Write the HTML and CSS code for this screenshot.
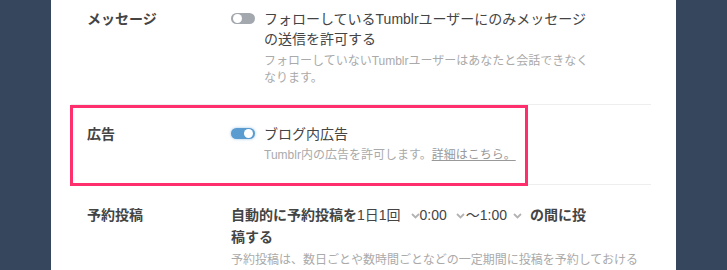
FILE: index.html
```html
<!DOCTYPE html>
<html lang="ja">
<head>
    <meta charset="UTF-8">
    <title>設定</title>
    <link rel="stylesheet" href="styles.css">
</head>
<body>

<div class="page">
    <div class="panel">
        <div class="row first">
            <div class="label">メッセージ</div>
            <div class="field">
                <div class="toggle-line">
                    <span class="toggle"></span>
                    <div class="toggle-text">
                        <p class="main">フォローしているTumblrユーザーにのみメッセージの送信を許可する</p>
                        <p class="desc">フォローしていないTumblrユーザーはあなたと会話できなくなります。</p>
                    </div>
                </div>
            </div>
        </div>

        <div class="row">
            <div class="label">広告</div>
            <div class="field">
                <div class="toggle-line">
                    <span class="toggle on"></span>
                    <div class="toggle-text">
                        <p class="main">ブログ内広告</p>
                        <p class="desc">Tumblr内の広告を許可します。<a href="#">詳細はこちら。</a></p>
                    </div>
                </div>
            </div>
            <div class="highlight"></div>
        </div>

        <div class="row tall">
            <div class="label">予約投稿</div>
            <div class="field">
                <p class="schedule">自動的に予約投稿を<span class="pick">1日1回<svg class="chev c1" viewBox="0 0 9 6" width="9" height="6"><polyline points="1,1 4.5,4.5 8,1"/></svg></span><span class="pick">0:00<svg class="chev c2" viewBox="0 0 9 6" width="9" height="6"><polyline points="1,1 4.5,4.5 8,1"/></svg></span><span class="pick">〜1:00<svg class="chev c3" viewBox="0 0 9 6" width="9" height="6"><polyline points="1,1 4.5,4.5 8,1"/></svg></span>の間に投稿する</p>
                <p class="desc wide">予約投稿は、数日ごとや数時間ごとなどの一定期間に投稿を予約しておけるので、ブログを更新し続けることができます。</p>
            </div>
        </div>
    </div>
</div>

</body>
</html>
```

FILE: styles.css
```css
html, body {
    height: 100%;
}
body {
    margin: 0;
    background-color: #36465d;
    font-family: "Liberation Sans", "Noto Sans CJK JP", sans-serif;
    color: #444;
    overflow: hidden;
}
p {
    margin: 0;
}
.page {
    padding-left: 51px;
    height: 100%;
}
.panel {
    width: 580px;
    height: 100%;
    background-color: #fff;
    padding: 0 25px 0 20px;
}
.row {
    display: flex;
    position: relative;
    padding: 19px 0 20px 16px;
    border-bottom: 1px solid #eee;
    line-height: 20px;
}
.row.first {
    padding-top: 9px;
    padding-bottom: 17px;
}
.row.first .desc {
    margin-top: 4px;
}
.row.tall {
    border-bottom: none;
    line-height: 22px;
}
.label {
    width: 144px;
    flex-shrink: 0;
    font-size: 14px;
    font-weight: bold;
}
.toggle-line {
    display: flex;
    gap: 9px;
}
.toggle {
    width: 24px;
    height: 11px;
    margin-top: 4px;
    border-radius: 6px;
    background-color: #a3a8af;
    position: relative;
    flex-shrink: 0;
}
.toggle::after {
    content: "";
    position: absolute;
    top: 1px;
    left: 2px;
    width: 9px;
    height: 9px;
    border-radius: 50%;
    background-color: #fff;
}
.toggle.on {
    background-color: #5a9bd0;
    box-shadow: 0 0 3px rgba(90,155,208,0.6);
}
.toggle.on::after {
    left: 13px;
}
.toggle-text {
    width: 326px;
}
.main {
    font-size: 14px;
}
.desc {
    margin-top: 3px;
    font-size: 12px;
    line-height: 17px;
    color: #aaa;
}
.desc a {
    color: #999;
    text-decoration: underline;
}
.desc.wide {
    width: 412px;
    margin-top: 4px;
}
.schedule {
    width: 360px;
    font-size: 14px;
    font-weight: bold;
}
.pick {
    font-weight: normal;
}
.chev {
    margin-bottom: 1px;
    vertical-align: middle;
}
.chev.c1 {
    margin-left: 10px;
}
.chev.c2 {
    margin-left: 9px;
    margin-right: 1px;
}
.chev.c3 {
    margin-left: 6px;
    margin-right: 8px;
}
.chev polyline {
    fill: none;
    stroke: #b3b3b3;
    stroke-width: 1.8;
}
.highlight {
    position: absolute;
    left: -1px;
    top: 0;
    width: 452px;
    height: 75px;
    border: 3px solid #fe2f6c;
}
```
